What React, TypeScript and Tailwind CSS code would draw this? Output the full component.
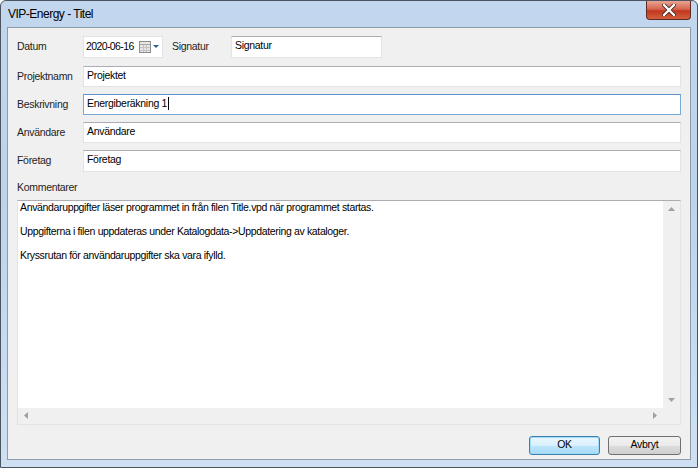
import React from "react";

// Windows 7 style dialog: "VIP-Energy - Titel"
const FONT = { fontFamily: '"Liberation Sans", Arial, sans-serif' };

const Field: React.FC<{ value: string; focused?: boolean; className?: string }> = ({
  value,
  focused,
  className,
}) => (
  <div
    className={
      "flex h-[21px] items-start whitespace-nowrap border bg-white px-[3px] pt-[1px] text-[10.5px] leading-[14px] tracking-[-0.3px] text-black " +
      (focused
        ? "border-[#7aaad6] border-t-[#5c93c9] "
        : "border-[#e2e3e5] border-t-[#abadb3] ") +
      (className ?? "")
    }
  >
    <span>{value}</span>
    {focused && <span className="ml-[1px] mt-[1px] inline-block h-[13px] w-px bg-black" />}
  </div>
);

const Row: React.FC<{ label: string; children: React.ReactNode }> = ({ label, children }) => (
  <div className="flex items-center">
    <span className="w-[66px] shrink-0 text-[10.5px] tracking-[-0.3px] text-[#1e1e1e]">{label}</span>
    <div className="flex-1">{children}</div>
  </div>
);

const CalendarIcon = () => (
  <svg width="22" height="12" viewBox="0 0 22 12">
    <rect x="0.5" y="0.5" width="11" height="11" fill="#e6e6e6" stroke="#8c8c8c" />
    <line x1="1" y1="3.5" x2="11" y2="3.5" stroke="#a8a8a8" />
    <line x1="1" y1="6.5" x2="11" y2="6.5" stroke="#c4c4c4" />
    <line x1="1" y1="9.5" x2="11" y2="9.5" stroke="#c4c4c4" />
    <line x1="4.5" y1="4" x2="4.5" y2="11" stroke="#c4c4c4" />
    <line x1="7.5" y1="4" x2="7.5" y2="11" stroke="#c4c4c4" />
    <path d="M14 4 L20 4 L17 7 Z" fill="#2c5f9a" />
  </svg>
);

export default function App() {
  return (
    <div className="h-[468px] w-[698px] bg-white" style={FONT}>
      <div className="relative flex h-[468px] w-[698px] flex-col rounded-t-[6px] border border-[#4b5562] bg-[linear-gradient(180deg,#c2d7ee_0%,#bcd3ec_40%,#cfe0f3_100%)] px-[6px] pb-[7px]">
        {/* title bar */}
        <div className="flex h-[26px] items-center pl-[1px] text-[12px] tracking-[-0.5px] text-black">VIP-Energy - Titel</div>
        <div className="absolute right-[6px] top-0 flex h-[19px] w-[45px] items-center justify-center rounded-b-[4px] border border-t-0 border-[#5e2a22] bg-[linear-gradient(180deg,#e8a493_0%,#d7654f_45%,#c2371f_55%,#d2603c_100%)]">
          <svg width="14" height="12" viewBox="0 0 14 12">
            <path
              d="M2 1 L12 11 M12 1 L2 11"
              stroke="#4a2a25"
              strokeWidth="4"
              strokeLinecap="round"
              fill="none"
            />
            <path d="M2 1 L12 11 M12 1 L2 11" stroke="#ffffff" strokeWidth="2.4" strokeLinecap="round" fill="none" />
          </svg>
        </div>

        {/* client area */}
        <div className="flex flex-1 flex-col border border-[#8e9bab] bg-[#f0f0f0] pl-[9px] pr-[9px] pt-[8px]">
          <div className="flex items-center">
            <span className="w-[66px] shrink-0 text-[10.5px] tracking-[-0.3px] text-[#1e1e1e]">Datum</span>
            <div className="flex h-[22px] w-[80px] items-center gap-[6px] whitespace-nowrap border border-[#e2e3e5] bg-white pl-[2px] text-[10.5px] tracking-[-0.6px]">
              <span className="w-[47px]">2020-06-16</span>
              <CalendarIcon />
            </div>
            <span className="ml-[9px] w-[59px] text-[10.5px] tracking-[-0.3px] text-[#1e1e1e]">Signatur</span>
            <Field value="Signatur" className="h-[22px] w-[151px]" />
          </div>

          <div className="mt-[8px] flex flex-col gap-[7px]">
            <Row label="Projektnamn">
              <Field value="Projektet" />
            </Row>
            <Row label="Beskrivning">
              <Field value="Energiberäkning 1" focused />
            </Row>
            <Row label="Användare">
              <Field value="Användare" />
            </Row>
            <Row label="Företag">
              <Field value="Företag" className="h-[22px]" />
            </Row>
          </div>

          <div className="mt-[8px] text-[10.5px] tracking-[-0.3px] text-[#1e1e1e]">Kommentarer</div>

          {/* comment box */}
          <div className="mt-[4px] flex h-[225px] flex-col border border-[#e2e3e5] border-t-[#abadb3] bg-white">
            <div className="flex flex-1">
              <div className="flex-1 px-[2px] pt-0 text-[10.5px] leading-[12px] tracking-[-0.35px] text-black">
                <div>Användaruppgifter läser programmet in från filen Title.vpd när programmet startas.</div>
                <div className="h-[12px]" />
                <div>Uppgifterna i filen uppdateras under Katalogdata-&gt;Uppdatering av kataloger.</div>
                <div className="h-[12px]" />
                <div>Kryssrutan för användaruppgifter ska vara ifylld.</div>
              </div>
              <div className="flex w-[17px] flex-col items-center justify-between bg-[#f0f0f0] py-[6px]">
                <svg width="7" height="4" viewBox="0 0 7 4">
                  <path d="M0 4 L3.5 0 L7 4 Z" fill="#a0a0a0" />
                </svg>
                <svg width="7" height="4" viewBox="0 0 7 4">
                  <path d="M0 0 L3.5 4 L7 0 Z" fill="#a0a0a0" />
                </svg>
              </div>
            </div>
            <div className="flex h-[16px]">
              <div className="flex flex-1 items-center justify-between bg-[#f0f0f0] px-[6px]">
                <svg width="4" height="7" viewBox="0 0 4 7">
                  <path d="M4 0 L0 3.5 L4 7 Z" fill="#a0a0a0" />
                </svg>
                <svg width="4" height="7" viewBox="0 0 4 7">
                  <path d="M0 0 L4 3.5 L0 7 Z" fill="#a0a0a0" />
                </svg>
              </div>
              <div className="w-[17px] bg-[#f0f0f0]" />
            </div>
          </div>

          {/* buttons */}
          <div className="mt-[11px] flex justify-end gap-[8px]">
            <button className="flex h-[19px] w-[71px] items-center justify-center rounded-[3px] border border-[#3c7fb1] bg-[linear-gradient(180deg,#eaf6fd_0%,#d9f0fc_50%,#bee6fd_51%,#a7d9f5_100%)] text-[10.5px] tracking-[-0.3px] text-black shadow-[inset_0_0_0_1px_#9fdaf8]">
              OK
            </button>
            <button className="flex h-[19px] w-[73px] items-center justify-center rounded-[3px] border border-[#707070] bg-[linear-gradient(180deg,#f2f2f2_0%,#ebebeb_50%,#dddddd_51%,#cfcfcf_100%)] text-[10.5px] tracking-[-0.3px] text-black">
              Avbryt
            </button>
          </div>
        </div>
      </div>
    </div>
  );
}
